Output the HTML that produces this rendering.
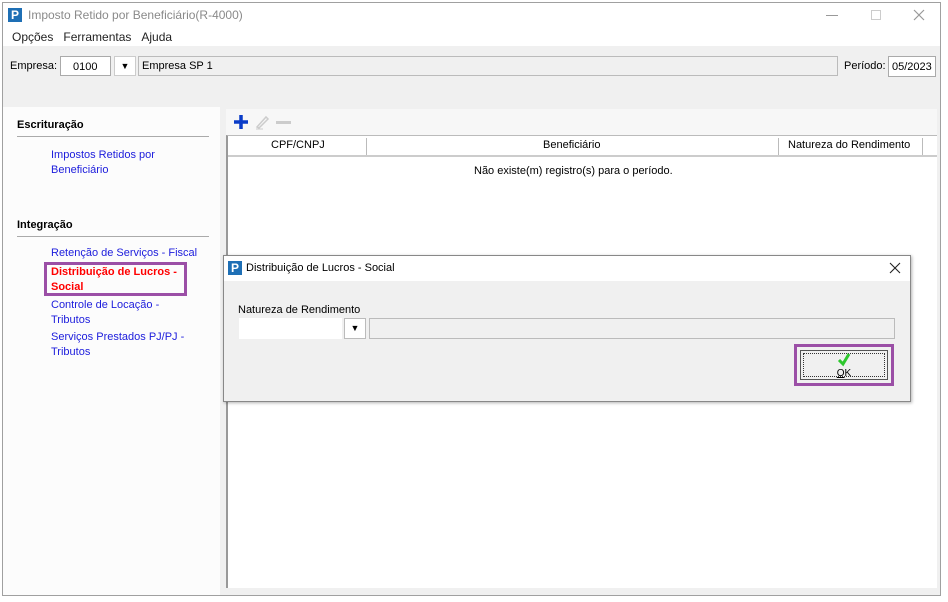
<!DOCTYPE html>
<html><head><meta charset="utf-8"><style>
*{margin:0;padding:0;box-sizing:border-box}
body{width:948px;height:602px;background:#fff;font-family:"Liberation Sans","DejaVu Sans",sans-serif;font-size:11px;position:relative;overflow:hidden;color:#000}
.a{position:absolute;white-space:nowrap}
.logo{width:14px;height:14px;background:#1e6fb5;color:#fff;font-weight:bold;font-size:12px;line-height:14px;text-align:center}
a{color:#1c1cdc;text-decoration:none}
</style></head><body>
<div class="a" style="left:2px;top:2px;width:939px;height:594px;border:1px solid #a0a0a0;background:#f0f0f0"></div>
<div class="a" style="left:3px;top:3px;width:937px;height:43px;background:#fff"></div>
<div class="a logo" style="left:8px;top:8px">P</div>
<div class="a" style="left:28px;top:8px;color:#8a8a8a;font-size:12px">Imposto Retido por Beneficiário(R-4000)</div>
<div class="a" style="left:826px;top:15px;width:12px;height:1px;background:#999"></div>
<div class="a" style="left:871px;top:10px;width:10px;height:10px;border:1px solid #ccc"></div>
<svg class="a" style="left:913px;top:9px" width="12" height="12"><path d="M1 1L11 11M11 1L1 11" stroke="#999" stroke-width="1.2"/></svg>
<div class="a" style="left:12px;top:30px;font-size:12px;color:#222">Opções&nbsp;&nbsp;&nbsp;Ferramentas&nbsp;&nbsp;&nbsp;Ajuda</div>
<div class="a" style="left:10px;top:60px">Empresa:</div>
<div class="a" style="left:60px;top:56px;width:51px;height:20px;background:#fff;border:1px solid #aaa;padding:4px 0 0 12px">0100</div>
<div class="a" style="left:114px;top:56px;width:22px;height:20px;background:#fff;border:1px solid #ccc;font-size:9px;text-align:center;line-height:19px">▼</div>
<div class="a" style="left:138px;top:56px;width:700px;height:20px;border:1px solid #bbb;background:#f0f0f0;padding:3px 3px">Empresa SP 1</div>
<div class="a" style="left:844px;top:60px">Período:</div>
<div class="a" style="left:888px;top:56px;width:48px;height:21px;background:#fff;border:1px solid #aaa;padding:4px 3px">05/2023</div>
<div class="a" style="left:3px;top:107px;width:217px;height:488px;background:#fcfcfc"></div>
<div class="a" style="left:17px;top:119px;font-weight:bold">Escrituração</div>
<div class="a" style="left:17px;top:136px;width:192px;height:1px;background:#aaa"></div>
<a class="a" style="left:51px;top:148px;line-height:15px">Impostos Retidos por<br>Beneficiário</a>
<div class="a" style="left:17px;top:219px;font-weight:bold">Integração</div>
<div class="a" style="left:17px;top:236px;width:192px;height:1px;background:#aaa"></div>
<a class="a" style="left:51px;top:247px">Retenção de Serviços - Fiscal</a>
<div class="a" style="left:44px;top:262px;width:143px;height:34px;border:3px solid #9b4fa6"></div>
<div class="a" style="left:51px;top:265px;line-height:15px;color:#f00;font-weight:bold">Distribuição de Lucros -<br>Social</div>
<a class="a" style="left:51px;top:298px;line-height:15px">Controle de Locação -<br>Tributos</a>
<a class="a" style="left:51px;top:330px;line-height:15px">Serviços Prestados PJ/PJ -<br>Tributos</a>
<div class="a" style="left:226px;top:109px;width:711px;height:26px;background:#f7f7f7"></div>
<svg class="a" style="left:233px;top:114px" width="16" height="16"><path d="M8 1V15M1 8H15" stroke="#0a3cc8" stroke-width="3.5"/></svg>
<svg class="a" style="left:254px;top:113px" width="18" height="18"><path d="M3 14L12 4L14 6L5 15Z" fill="none" stroke="#ccc" stroke-width="1.5"/><path d="M2 16H9" stroke="#ccc"/></svg>
<div class="a" style="left:276px;top:121px;width:15px;height:3px;background:#ccc"></div>
<div class="a" style="left:226px;top:135px;width:711px;height:453px;background:#fff;border-left:2px solid #999;border-top:1px solid #bbb"></div>
<div class="a" style="left:228px;top:136px;width:709px;height:21px;border-bottom:2px solid #ccc;background:#fff"></div>
<div class="a" style="left:271px;top:139px">CPF/CNPJ</div>
<div class="a" style="left:366px;top:138px;width:1px;height:17px;background:#bbb"></div>
<div class="a" style="left:543px;top:139px">Beneficiário</div>
<div class="a" style="left:778px;top:138px;width:1px;height:17px;background:#bbb"></div>
<div class="a" style="left:788px;top:139px">Natureza do Rendimento</div>
<div class="a" style="left:922px;top:138px;width:1px;height:17px;background:#bbb"></div>
<div class="a" style="left:474px;top:165px">Não existe(m) registro(s) para o período.</div>
<div class="a" style="left:223px;top:255px;width:688px;height:147px;background:#f0f0f0;border:1px solid #888;box-shadow:1px 1px 3px rgba(0,0,0,.3)"></div>
<div class="a" style="left:224px;top:256px;width:686px;height:25px;background:#fff"></div>
<div class="a logo" style="left:228px;top:261px">P</div>
<div class="a" style="left:246px;top:262px">Distribuição de Lucros - Social</div>
<svg class="a" style="left:889px;top:262px" width="12" height="12"><path d="M1 1L11 11M11 1L1 11" stroke="#222" stroke-width="1.1"/></svg>
<div class="a" style="left:238px;top:304px;font-size:11px">Natureza de Rendimento</div>
<div class="a" style="left:239px;top:318px;width:103px;height:21px;background:#fff"></div>
<div class="a" style="left:344px;top:318px;width:22px;height:21px;background:#fff;border:1px solid #bbb;font-size:9px;text-align:center;line-height:19px">▼</div>
<div class="a" style="left:369px;top:318px;width:526px;height:21px;border:1px solid #bbb;background:#f0f0f0"></div>
<div class="a" style="left:794px;top:344px;width:100px;height:42px;border:3px solid #9b4fa6"></div>
<div class="a" style="left:800px;top:350px;width:88px;height:30px;border:1px solid #555;outline:1px dotted #333;outline-offset:-4px;background:#f0f0f0;text-align:center;font-size:10px;padding-top:17px"><u>O</u>K</div>
<svg class="a" style="left:837px;top:352px" width="14" height="15"><path d="M2 8 L6 12 L12 2" stroke="#2ec82e" stroke-width="3" fill="none"/></svg>
</body></html>
